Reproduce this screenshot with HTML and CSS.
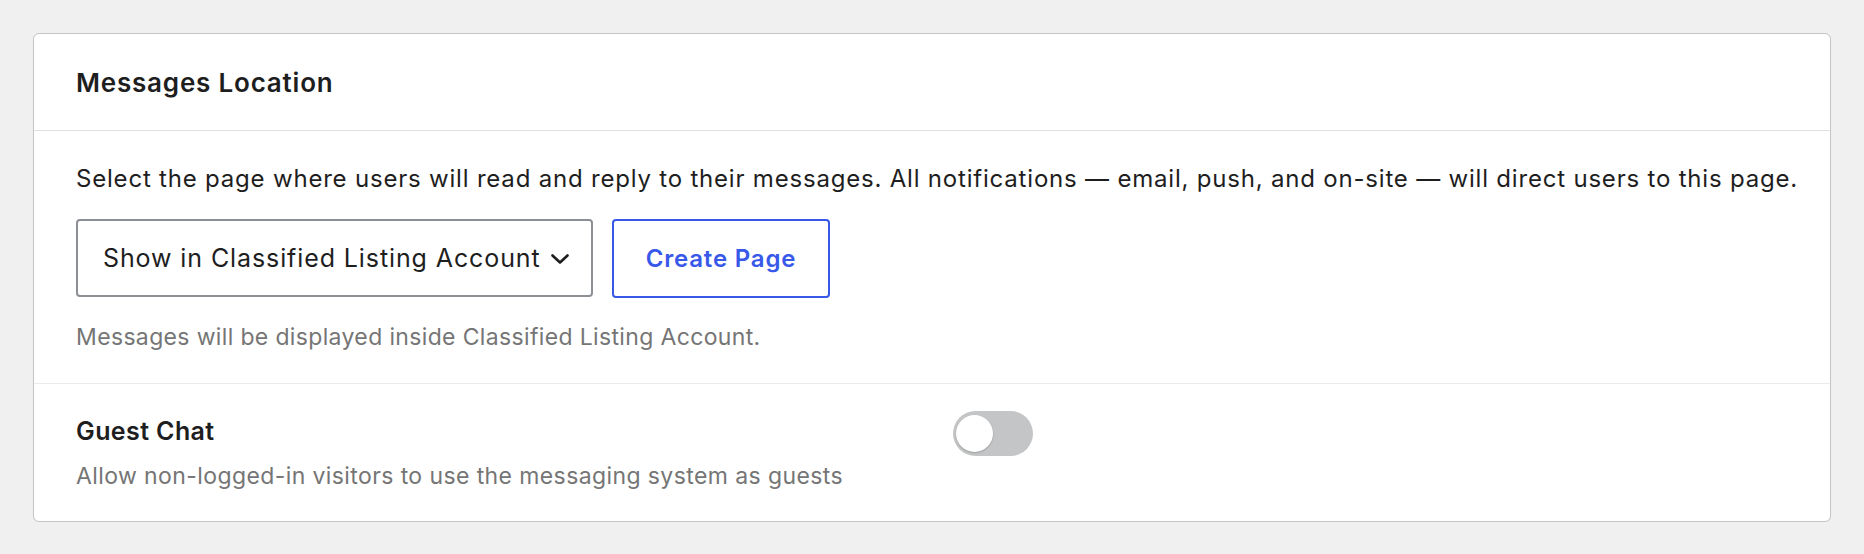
FILE: index.html
```html
<!DOCTYPE html>
<html lang="en">
<head>
<meta charset="utf-8">
<title>Messages Location</title>
<link rel="stylesheet" href="styles.css">
</head>
<body>
<div class="page">
  <section class="card">
    <header class="card-header">
      <h2 class="card-title">Messages Location</h2>
    </header>
    <div class="card-section">
      <p class="lead">Select the page where users will read and reply to their messages. All notifications — email, push, and on-site — will direct users to this page.</p>
      <div class="controls">
        <div class="select" role="combobox" aria-expanded="false">
          <span class="select-value">Show in Classified Listing Account</span>
          <svg class="chevron" width="18" height="10" viewBox="0 0 18 10" aria-hidden="true"><path d="M1.5 1.5 L9 8.5 L16.5 1.5" fill="none" stroke="#1e1e1e" stroke-width="2.6" stroke-linecap="round" stroke-linejoin="round"/></svg>
        </div>
        <button class="btn-outline" type="button">Create Page</button>
      </div>
      <p class="hint">Messages will be displayed inside Classified Listing Account.</p>
    </div>
    <div class="card-section setting-row">
      <div class="setting-label">
        <div class="setting-title">Guest Chat</div>
        <div class="setting-desc">Allow non-logged-in visitors to use the messaging system as guests</div>
      </div>
      <div class="toggle" role="switch" aria-checked="false"><span class="knob"></span></div>
    </div>
  </section>
</div>
</body>
</html>
```

FILE: styles.css
```css
* { box-sizing: border-box; }
html, body { margin: 0; padding: 0; }
body {
  background: #f0f0f1;
  font-family: Inter, "Noto Sans", "Liberation Sans", sans-serif;
  color: #1e1e1e;
}
.page {
  padding: 33px 33px 0 33px;
}
.card {
  background: #fff;
  border: 1px solid #c3c4c7;
  border-radius: 6px;
  box-shadow: 0 1px 1px rgba(0,0,0,0.04);
}
.card-header {
  padding: 31px 42px 29px;
  border-bottom: 1px solid #e0e0e0;
}
.card-title {
  margin: 0;
  font-size: 26px;
  line-height: 36px;
  font-weight: 600;
  letter-spacing: 0.8px;
  color: #1e1e1e;
}
.card-section {
  padding: 31px 42px 30px;
}
.card-section + .card-section {
  border-top: 1px solid #ebebeb;
}
.lead {
  margin: 0;
  font-size: 24px;
  line-height: 34px;
  letter-spacing: 0.8px;
  white-space: nowrap;
}
.controls {
  display: flex;
  gap: 19px;
  margin-top: 23px;
}
.select {
  width: 517px;
  height: 78px;
  border: 2px solid #8c8f94;
  border-radius: 4px;
  display: flex;
  align-items: center;
  justify-content: space-between;
  padding: 0 22px 0 25px;
  font-size: 25px;
  letter-spacing: 0.9px;
  color: #1e1e1e;
  background: #fff;
  white-space: nowrap;
}
.chevron { display: block; margin-top: 2px; flex: none; }
.btn-outline {
  width: 218px;
  height: 79px;
  border: 2px solid #3858e9;
  border-radius: 4px;
  background: #fff;
  color: #3858e9;
  font-family: inherit;
  font-size: 24px;
  font-weight: 600;
  letter-spacing: 0.8px;
  padding: 0;
  cursor: pointer;
}
.hint {
  margin: 23px 0 0;
  font-size: 23px;
  line-height: 32px;
  letter-spacing: 0.35px;
  color: #757575;
}
.setting-row {
  display: flex;
  align-items: flex-start;
  padding-top: 30px;
  padding-bottom: 29px;
}
.setting-label {
  flex: 0 0 877px;
}
.setting-title {
  font-size: 25px;
  line-height: 34px;
  font-weight: 600;
  letter-spacing: 0.4px;
}
.setting-desc {
  margin-top: 12px;
  font-size: 23px;
  line-height: 32px;
  letter-spacing: 0.4px;
  color: #757575;
}
.toggle {
  width: 80px;
  height: 45px;
  margin-top: -3px;
  border-radius: 23px;
  background: #c4c5c6;
  position: relative;
}
.knob {
  position: absolute;
  top: 4px;
  left: 3px;
  width: 37px;
  height: 37px;
  border-radius: 50%;
  background: #fff;
  box-shadow: 0 1px 2px rgba(0,0,0,0.2);
}
```
